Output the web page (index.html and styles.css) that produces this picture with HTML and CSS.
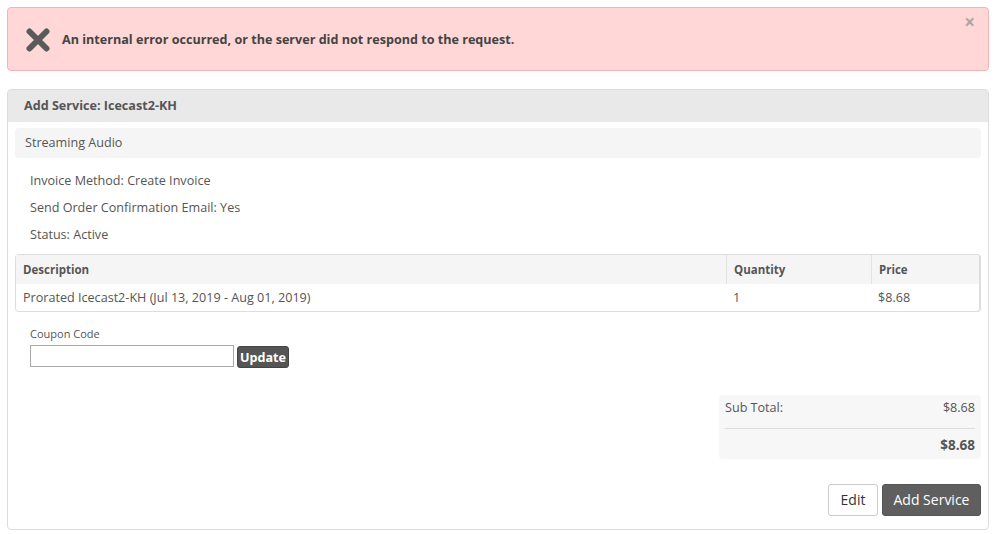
FILE: index.html
```html
<!DOCTYPE html>
<html>
<head>
<meta charset="utf-8">
<link rel="stylesheet" href="styles.css">
</head>
<body>
<div class="page">
  <div class="alert">
    <svg class="alert-icon" width="24" height="24" viewBox="0 0 24 24">
      <path d="M3.5 3.5 L20.5 20.5 M20.5 3.5 L3.5 20.5" stroke="#5a5a5a" stroke-width="6" stroke-linecap="round"/>
    </svg>
    <span class="alert-text">An internal error occurred, or the server did not respond to the request.</span>
    <span class="alert-close">×</span>
  </div>

  <div class="panel">
    <div class="panel-heading">Add Service: Icecast2-KH</div>
    <div class="panel-body">
      <div class="well">Streaming Audio</div>
      <div class="info">
        <div class="info-line">Invoice Method: Create Invoice</div>
        <div class="info-line">Send Order Confirmation Email: Yes</div>
        <div class="info-line">Status: Active</div>
      </div>
      <table class="items">
        <thead>
          <tr><th class="c-desc">Description</th><th class="c-qty">Quantity</th><th class="c-price">Price</th></tr>
        </thead>
        <tbody>
          <tr><td>Prorated Icecast2-KH (Jul 13, 2019 - Aug 01, 2019)</td><td>1</td><td>$8.68</td></tr>
        </tbody>
      </table>
      <div class="coupon">
        <label class="coupon-label">Coupon Code</label>
        <div class="coupon-row">
          <input class="coupon-input" type="text">
          <button class="btn-update">Update</button>
        </div>
      </div>
      <div class="totals-wrap">
        <div class="totals">
          <div class="tot-row sub"><span>Sub Total:</span><span>$8.68</span></div>
          <div class="tot-row total"><span></span><span>$8.68</span></div>
        </div>
      </div>
      <div class="actions">
        <button class="btn btn-default">Edit</button>
        <button class="btn btn-primary">Add Service</button>
      </div>
    </div>
  </div>
</div>
</body>
</html>
```
FILE: styles.css
```css
* { box-sizing: border-box; }
html, body { margin: 0; padding: 0; background: #fff; }
body {
  font-family: "Open Sans", "Liberation Sans", sans-serif;
  font-size: 12.6px;
  color: #555;
}
.page { padding: 7px 5px 0 7px; }

.alert {
  position: relative;
  display: flex;
  align-items: center;
  height: 64px;
  background: #ffd7d7;
  border: 1px solid #f5b3b3;
  border-radius: 4px;
  padding: 0 0 0 18px;
}
.alert-icon { flex: none; margin-right: 12px; margin-top: 1px; }
.alert-text { font-weight: bold; font-size: 12.6px; color: #444; }
.alert-close {
  position: absolute;
  right: 13px;
  top: 2px;
  font-size: 19px;
  font-weight: bold;
  color: #b0a5a5;
  line-height: 24px;
}

.panel {
  margin-top: 18px;
  border: 1px solid #ddd;
  border-radius: 4px;
  height: 441px;
}
.panel-heading {
  height: 32px;
  background: #e9e9e9;
  border-radius: 3px 3px 0 0;
  padding: 0 16px;
  line-height: 31px;
  font-weight: bold;
  color: #555;
}
.panel-body { padding: 6px 7px 12px 7px; }

.well {
  height: 30px;
  background: #f5f5f5;
  border-radius: 4px;
  padding: 0 10px;
  line-height: 29px;
}
.info { padding: 9px 15px 0 15px; }
.info-line { height: 27px; line-height: 27px; }

.items {
  width: 100%;
  margin-top: 6px;
  border-collapse: separate;
  border-spacing: 0;
  border: 1px solid #ddd;
  border-right-width: 2px;
  border-radius: 4px;
}
.items th {
  height: 29px;
  background: #f5f5f5;
  text-align: left;
  font-size: 11.5px;
  font-weight: bold;
  padding: 0 7px;
  border-left: 1px solid #e2e2e2;
}
.items th.c-desc { border-left: none; }
.items td {
  height: 27px;
  padding: 0 7px;
}
.c-qty { width: 145px; }
.c-price { width: 108px; }

.coupon { padding: 14px 15px 0 15px; }
.coupon-label { display: block; font-size: 11px; line-height: 15px; }
.coupon-row { display: flex; align-items: flex-start; margin-top: 4px; gap: 3px; }
.coupon-input {
  width: 204px;
  height: 22px;
  border: 1px solid #a9a9a9;
  padding: 0;
  margin: 0;
  background: #fff;
}
.btn-update {
  margin-top: 1px;
  height: 22px;
  width: 52px;
  background: #555;
  color: #fff;
  border: 1px solid #444;
  border-radius: 3px;
  font-family: "Open Sans", "Liberation Sans", sans-serif;
  font-weight: bold;
  font-size: 12.6px;
  padding: 0;
}

.totals-wrap { display: flex; justify-content: flex-end; margin-top: 27px; }
.totals {
  width: 262px;
  height: 64px;
  background: #f7f7f7;
  border-radius: 4px;
  padding: 0 6px;
}
.tot-row {
  display: flex;
  justify-content: space-between;
}
.tot-row.sub {
  height: 33px;
  line-height: 26px;
}
.tot-row.total {
  border-top: 1px solid #ddd;
  height: 31px;
  line-height: 32px;
  font-weight: bold;
  font-size: 13.5px;
}

.actions {
  display: flex;
  justify-content: flex-end;
  gap: 4px;
  margin-top: 25px;
}
.btn {
  height: 32px;
  border-radius: 3px;
  font-family: "Open Sans", "Liberation Sans", sans-serif;
  font-size: 14px;
  padding: 0 0 2px 0;
}
.btn-default {
  width: 50px;
  background: #fff;
  border: 1px solid #ccc;
  color: #333;
}
.btn-primary {
  width: 99px;
  background: #5f5f5f;
  border: 1px solid #555;
  color: #fff;
}
```
